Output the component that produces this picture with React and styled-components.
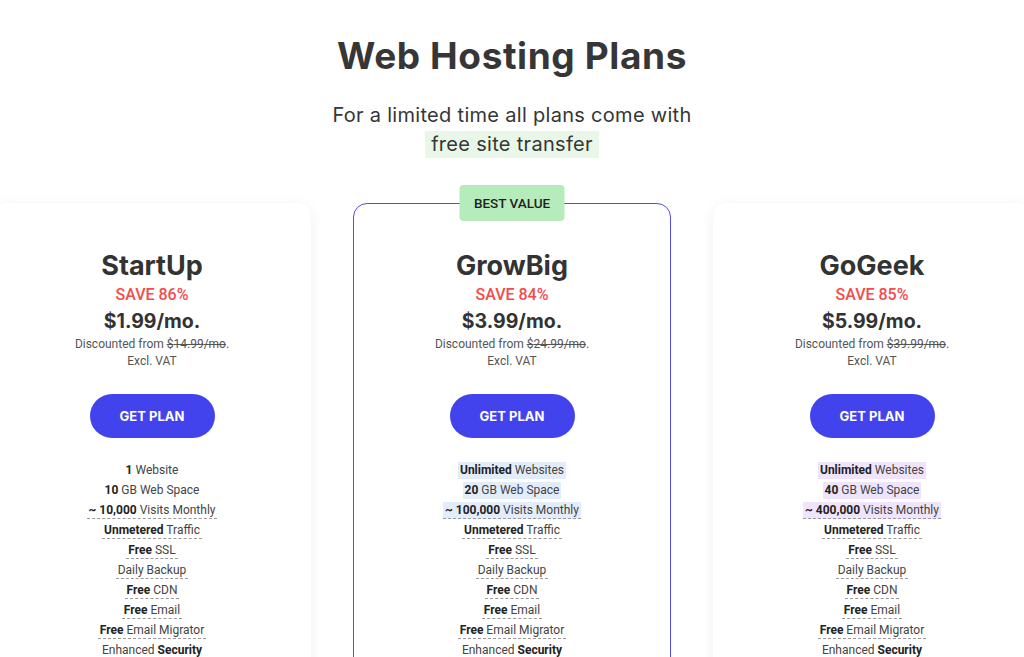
import React from 'react';
import styled, { createGlobalStyle } from 'styled-components';

const GlobalStyle = createGlobalStyle`
    html, body {
        margin: 0;
        padding: 0;
        background: #fff;
        overflow: hidden;
    }
    body {
        font-family: Roboto, "Liberation Sans", sans-serif;
        color: #333;
    }
`

const Page = styled.main`
    width: 1024px;
    height: 657px;
    overflow: hidden;
    display: flex;
    flex-direction: column;
    align-items: center;
`

const Title = styled.h1`
    margin: 34px 0 0;
    font-family: Inter, "Open Sans", sans-serif;
    font-weight: 700;
    font-size: 37px;
    line-height: 44px;
    letter-spacing: 0.6px;
    color: #363636;
`

const Subtitle = styled.p`
    margin: 23px 0 0;
    font-family: Inter, "Open Sans", sans-serif;
    font-size: 20px;
    line-height: 29px;
    letter-spacing: 0.3px;
    color: #363636;
    text-align: center;
`

const Highlight = styled.span`
    display: inline-block;
    background: #e8f7e8;
    padding: 0 6px;
    margin-top: 1px;
    line-height: 27px;
`

const Cards = styled.div`
    margin-top: 44px;
    display: flex;
    gap: 42px;
    justify-content: center;
    width: 1038px;
`

const Card = styled.section`
    position: relative;
    flex: 0 0 318px;
    box-sizing: border-box;
    height: 480px;
    border-radius: 14px;
    background: #fff;
    border: 1.5px solid ${p => p.$featured ? '#4d4df0' : 'transparent'};
    box-shadow: ${p => p.$featured ? 'none' : '0 2px 14px rgba(0,0,0,0.06)'};
    padding-top: 46px;
    display: flex;
    flex-direction: column;
    align-items: center;
`

const Badge = styled.div`
    position: absolute;
    top: -19px;
    left: 50%;
    transform: translateX(-50%);
    width: 105px;
    height: 36px;
    border-radius: 4px;
    background: #b6ecbb;
    color: #222;
    font-size: 13.5px;
    font-weight: 500;
    display: flex;
    align-items: center;
    justify-content: center;
`

const PlanName = styled.h2`
    margin: 0;
    font-family: Inter, "Open Sans", sans-serif;
    font-size: 27px;
    line-height: 32px;
    font-weight: 700;
    color: #333;
`

const Save = styled.div`
    margin-top: 2px;
    color: #f44b4b;
    font-size: 16px;
    font-weight: 500;
    line-height: 22px;
`

const Price = styled.div`
    font-family: Inter, "Open Sans", sans-serif;
    font-size: 19.5px;
    font-weight: 700;
    line-height: 30px;
    color: #333;
`

const Small = styled.div`
    font-size: 12px;
    line-height: 17px;
    color: #555;

    s { color: #555; }
`

const Button = styled.button`
    margin-top: 24px;
    width: 125px;
    height: 44px;
    border: none;
    border-radius: 22px;
    background: #4343ee;
    color: #fff;
    font-family: Inter, "Open Sans", sans-serif;
    font-size: 13px;
    font-weight: 700;
    cursor: pointer;
`

const Features = styled.ul`
    list-style: none;
    margin: 22px 0 0;
    padding: 0;
    display: flex;
    flex-direction: column;
    align-items: center;
`

const Feature = styled.li`
    line-height: 20px;
    height: 20px;
    font-size: 12px;
    color: #444;

    span {
        padding: 1px 2px;
        background: ${p => p.$tint || 'transparent'};
        border-bottom: 1px dashed ${p => p.$dashed ? '#999' : 'transparent'};
    }
    b { color: #222; font-weight: 700; }
`

const common = [
    { d: true, t: <><b>Unmetered</b> Traffic</> },
    { d: true, t: <><b>Free</b> SSL</> },
    { d: true, t: <>Daily Backup</> },
    { d: true, t: <><b>Free</b> CDN</> },
    { d: true, t: <><b>Free</b> Email</> },
    { d: true, t: <><b>Free</b> Email Migrator</> },
    { d: true, t: <>Enhanced <b>Security</b></> },
]

const plans = [
    {
        name: 'StartUp', save: 86, price: '1.99', old: '14.99', tint: null,
        top: [
            { t: <><b>1</b> Website</> },
            { t: <><b>10</b> GB Web Space</> },
            { d: true, t: <><b>~ 10,000</b> Visits Monthly</> },
        ],
    },
    {
        name: 'GrowBig', save: 84, price: '3.99', old: '24.99', tint: '#e3ecfb', featured: true,
        top: [
            { h: true, t: <><b>Unlimited</b> Websites</> },
            { h: true, t: <><b>20</b> GB Web Space</> },
            { h: true, d: true, t: <><b>~ 100,000</b> Visits Monthly</> },
        ],
    },
    {
        name: 'GoGeek', save: 85, price: '5.99', old: '39.99', tint: '#efe4fb',
        top: [
            { h: true, t: <><b>Unlimited</b> Websites</> },
            { h: true, t: <><b>40</b> GB Web Space</> },
            { h: true, d: true, t: <><b>~ 400,000</b> Visits Monthly</> },
        ],
    },
]

const App = () => {
    return (<Page>
        <GlobalStyle />
        <Title>Web Hosting Plans</Title>
        <Subtitle>
            For a limited time all plans come with<br />
            <Highlight>free site transfer</Highlight>
        </Subtitle>
        <Cards>
            {plans.map(plan => (
                <Card key={plan.name} $featured={plan.featured}>
                    {plan.featured && <Badge>BEST VALUE</Badge>}
                    <PlanName>{plan.name}</PlanName>
                    <Save>SAVE {plan.save}%</Save>
                    <Price>${plan.price}/mo.</Price>
                    <Small>Discounted from <s>${plan.old}/mo</s>.</Small>
                    <Small>Excl. VAT</Small>
                    <Button>GET PLAN</Button>
                    <Features>
                        {[...plan.top, ...common].map((f, i) => (
                            <Feature key={i} $dashed={f.d} $tint={f.h ? plan.tint : null}>
                                <span>{f.t}</span>
                            </Feature>
                        ))}
                    </Features>
                </Card>
            ))}
        </Cards>
    </Page>);
}

export default App;
